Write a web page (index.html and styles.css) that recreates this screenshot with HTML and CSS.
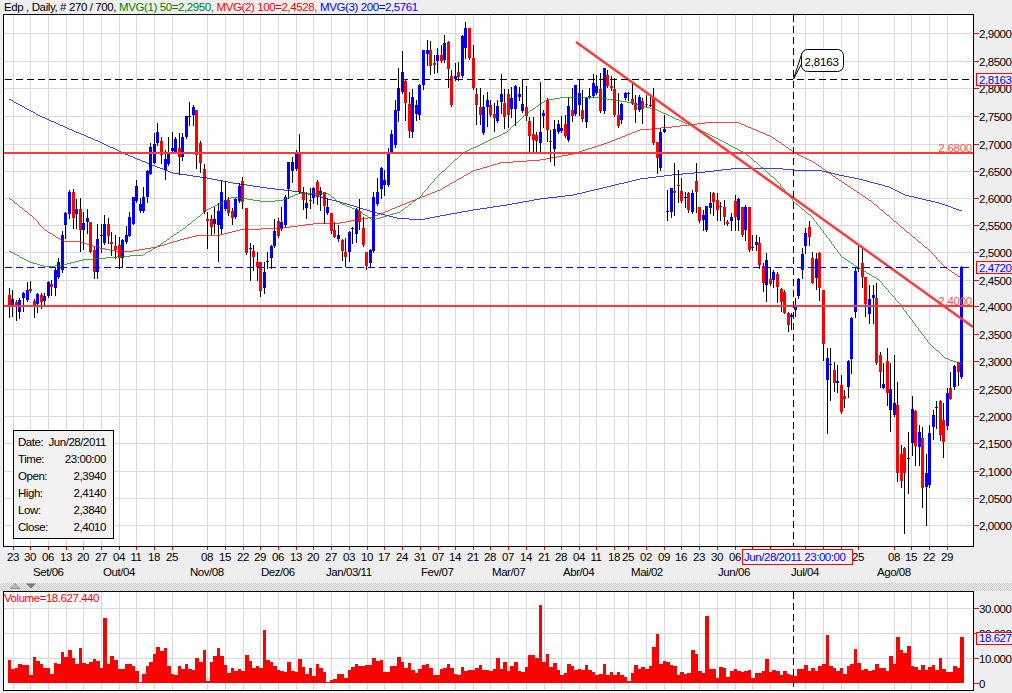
FILE: index.html
```html
<!DOCTYPE html>
<html lang="pt">
<head>
<meta charset="utf-8">
<title>Edp, Daily</title>
<link rel="stylesheet" href="styles.css">
</head>
<body>
<div class="page">
  <header class="title"><span>Edp , Daily, # 270 / 700, </span><span class="c-green">MVG(1) 50=2,2950, </span><span class="c-red">MVG(2) 100=2,4528, </span><span class="c-blue">MVG(3) 200=2,5761</span></header>
  <section class="price-panel">
    <svg id="price" class="plot" viewBox="0 14 1012 569" width="1012" height="569" xmlns="http://www.w3.org/2000/svg"></svg>
    <dl class="info">
      <div class="info-row"><dt>Date:</dt><dd>Jun/28/2011</dd></div>
      <div class="info-row"><dt>Time:</dt><dd>23:00:00</dd></div>
      <div class="info-row"><dt>Open:</dt><dd>2,3940</dd></div>
      <div class="info-row"><dt>High:</dt><dd>2,4140</dd></div>
      <div class="info-row"><dt>Low:</dt><dd>2,3840</dd></div>
      <div class="info-row"><dt>Close:</dt><dd>2,4010</dd></div>
    </dl>
  </section>
  <div class="splitter">
    <svg class="arrows" viewBox="0 0 30 6" width="30" height="6" xmlns="http://www.w3.org/2000/svg">
      <path class="arrow-up" d="M0 5.5 5 .5l5 5z"/>
      <path class="arrow-down" d="M16 .5h10l-5 5z"/>
    </svg>
  </div>
  <section class="volume-panel">
    <svg id="volume" class="plot" viewBox="0 591 1012 102" width="1012" height="102" xmlns="http://www.w3.org/2000/svg"></svg>
  </section>
</div>
<script src="chart.js"></script>
</body>
</html>
```
FILE: styles.css
```css
* { box-sizing: border-box; }
html, body { margin: 0; padding: 0; }
body {
  background: #eeeeee;
  font-family: "Liberation Sans", Arial, sans-serif;
  font-size: 11.5px;
  letter-spacing: -0.45px;
  color: #000;
  overflow: hidden;
}
.page { width: 1012px; height: 693px; display: flex; flex-direction: column; }
.title { height: 14px; line-height: 14px; padding-left: 4px; white-space: pre; letter-spacing: -0.39px; }
.c-green { color: #008000; }
.c-red { color: #ff0000; }
.c-blue { color: #0000ff; }
.price-panel { position: relative; height: 569px; }
.volume-panel { height: 102px; }
.plot { display: block; }
.plot text { font-family: "Liberation Sans", Arial, sans-serif; font-size: 11.5px; letter-spacing: -0.45px; fill: #000; }
.plot .callout-text { letter-spacing: -0.15px; }
.plot .tag-text { fill: #0000ff; }
.plot .level-text { fill: #ff5050; letter-spacing: -0.25px; }
.plot .vol-title { fill: #ff0000; }
.bg { fill: #ffffff; }
.frame { fill: none; stroke: #000; stroke-width: 1; shape-rendering: crispEdges; }
.grid { stroke: #d9d9d9; stroke-width: 1; shape-rendering: crispEdges; fill: none; }
.tick { stroke: #ff0000; stroke-width: 1; shape-rendering: crispEdges; fill: none; }
.wick { fill: #000; shape-rendering: crispEdges; }
.body-red, .vol-bar { fill: #ff0000; shape-rendering: crispEdges; }
.body-blue { fill: #0000ff; shape-rendering: crispEdges; }
.ma { fill: none; stroke-width: 0.75; shape-rendering: crispEdges; }
.ma-green { stroke: #008c00; }
.ma-red { stroke: #ff0000; }
.ma-blue { stroke: #0000d0; }
.level { stroke: #ff3838; stroke-width: 2; shape-rendering: crispEdges; }
.trend { stroke: #ff3838; stroke-width: 2.4; }
.dash-black { stroke: #000; stroke-width: 1; stroke-dasharray: 7 4; shape-rendering: crispEdges; }
.dash-blue { stroke: #0000ff; stroke-width: 1; stroke-dasharray: 7 4; shape-rendering: crispEdges; }
.callout { fill: #fff; stroke: #000; stroke-width: 1; }
.pointer { stroke: #000; stroke-width: 1; fill: none; }
.tag { fill: #f1f1f1; stroke: #ff0000; stroke-width: 1; shape-rendering: crispEdges; }
.info {
  position: absolute;
  left: 13px;
  top: 416px;
  width: 101px;
  height: 109px;
  margin: 0;
  padding: 3px 7px 2px 4px;
  border: 1px solid #000;
  background: #f2f2f2;
}
.info-row { display: flex; justify-content: space-between; height: 17px; line-height: 17px; }
.info dt, .info dd { margin: 0; }
.splitter {
  height: 8px;
  background-color: #f2f2f2;
  background-image: repeating-conic-gradient(#c6c6c6 0 25%, #f2f2f2 0 50%);
  background-size: 2px 2px;
  padding-left: 10px;
}
.arrows { display: block; }
.arrow-up { fill: #b8b8b8; stroke: #666; stroke-width: .5; }
.arrow-down { fill: #777; }
```
FILE: chart.js
```js
const NS = 'http://www.w3.org/2000/svg';
function el(parent, tag, attrs, text) {
  const n = document.createElementNS(NS, tag);
  for (const k in attrs) n.setAttribute(k, attrs[k]);
  if (text !== undefined) n.textContent = text;
  parent.appendChild(n);
  return n;
}
const R = 0, B = 1;
// colour, body top, body bottom, wick top, wick bottom (pixel rows)
const candles = [
[R,295,306,288,317],[B,299,306,290,316],[R,302,306,300,320],[B,300,312,298,318],[B,293,298,292,311],[B,290,300,282,301],[R,289,291,281,292],[R,301,306,299,317],[B,294,304,293,312],[R,295,302,293,308],
[B,296,301,293,306],[B,282,296,281,297],[R,284,287,280,295],[B,270,288,268,295],[B,262,277,258,278],[B,235,270,231,272],[B,213,225,212,238],[B,192,214,190,218],[R,192,218,189,228],[B,209,214,199,228],
[R,209,230,198,251],[B,223,230,212,249],[B,218,222,209,233],[R,222,252,222,252],[R,250,272,247,278],[B,239,272,224,278],[B,235,235,224,252],[B,224,243,215,244],[R,224,236,218,243],[R,242,244,232,255],
[R,246,250,235,258],[R,245,258,237,268],[B,240,258,239,267],[B,235,242,226,243],[B,217,236,212,236],[B,197,224,197,224],[B,186,201,180,202],[B,204,211,198,212],[B,197,211,187,212],[B,171,197,170,202],
[B,147,174,143,174],[B,144,163,133,163],[B,132,143,123,145],[R,141,155,137,163],[B,159,170,150,179],[B,152,164,137,165],[B,148,151,132,152],[B,139,152,137,153],[R,148,157,133,174],[B,137,157,133,160],
[B,116,137,116,138],[B,116,116,102,125],[B,107,115,105,125],[R,110,155,110,168],[R,143,163,141,172],[R,169,212,164,213],[R,219,221,212,248],[R,219,227,215,234],[B,219,224,207,233],[B,211,225,203,261],
[B,192,229,181,233],[B,200,209,182,210],[R,200,213,197,215],[R,211,218,208,224],[B,199,217,198,218],[B,186,201,183,202],[R,181,202,177,208],[R,208,253,208,254],[B,248,248,243,280],[R,251,257,245,270],
[R,262,267,252,280],[R,262,291,262,296],[B,272,288,262,293],[B,261,261,252,268],[B,246,258,245,268],[B,231,246,219,247],[R,221,236,218,237],[B,222,229,207,230],[B,197,225,195,226],[B,162,189,162,198],
[B,162,171,157,182],[B,154,169,150,170],[R,153,192,134,193],[R,192,200,187,209],[B,203,208,192,218],[R,200,201,188,208],[B,188,198,187,203],[R,182,196,180,204],[B,191,195,187,210],[R,192,206,192,223],
[B,207,213,198,214],[R,213,231,213,233],[R,230,237,222,237],[B,235,239,225,241],[R,240,251,239,260],[R,252,257,238,266],[B,232,252,231,261],[B,228,228,227,243],[B,209,234,208,242],[R,211,222,199,229],
[R,228,245,217,246],[R,252,266,252,269],[B,250,263,249,267],[B,197,251,192,252],[B,192,204,178,205],[B,168,189,167,198],[B,180,185,170,195],[B,153,185,148,186],[B,134,153,130,153],[B,110,145,100,147],
[B,88,111,68,121],[B,72,92,51,93],[R,81,103,80,120],[R,104,131,92,137],[B,97,132,89,137],[B,105,114,100,120],[B,85,115,84,119],[B,50,85,50,89],[B,50,54,40,65],[R,50,66,41,74],
[R,63,65,55,73],[B,55,61,48,72],[R,55,61,45,62],[B,43,60,35,62],[R,42,69,41,87],[R,76,105,70,106],[B,76,79,63,80],[R,72,77,62,80],[B,36,76,35,77],[B,28,48,22,58],
[R,28,58,28,59],[R,58,88,45,89],[R,94,105,88,124],[R,107,115,88,124],[B,107,133,95,134],[B,100,107,92,126],[R,105,115,100,116],[R,114,118,103,131],[B,106,121,100,122],[B,94,102,74,113],
[R,103,117,89,128],[R,94,115,89,127],[B,98,109,87,117],[B,86,109,85,125],[B,94,97,87,100],[B,104,111,80,112],[R,107,116,86,120],[R,121,136,117,152],[R,134,140,117,152],[R,135,141,132,152],
[B,132,143,82,153],[B,113,116,110,127],[R,100,130,98,141],[R,141,142,130,161],[B,129,149,120,165],[B,124,132,120,133],[B,128,131,116,132],[R,124,136,115,137],[B,106,140,97,141],[R,110,116,88,121],
[B,85,114,85,115],[B,93,105,79,115],[R,110,119,90,121],[B,98,122,97,127],[B,96,97,88,98],[B,83,96,74,97],[B,86,93,75,94],[R,89,111,73,112],[B,68,111,68,113],[R,75,86,70,87],
[R,86,88,76,90],[R,89,115,78,116],[R,115,126,93,127],[B,104,120,103,123],[B,93,98,92,99],[B,93,93,92,100],[R,99,103,83,104],[R,103,110,95,122],[B,97,110,95,111],[R,101,109,98,123],
[R,104,104,95,106],[B,105,105,97,106],[R,98,143,88,144],[R,142,158,142,173],[B,132,168,128,170],[B,129,132,115,132],[B,211,211,190,220],[B,188,212,188,217],[R,191,193,163,215],[R,185,185,170,202],
[R,191,201,178,202],[B,197,197,192,207],[R,193,210,192,212],[B,193,212,190,213],[R,181,192,163,212],[R,207,221,207,222],[B,215,220,210,230],[B,206,230,206,231],[B,203,208,192,213],[R,193,202,192,215],
[R,200,210,193,220],[B,206,206,202,220],[R,207,217,200,224],[R,222,224,220,225],[B,217,221,213,230],[R,201,217,195,230],[B,199,220,198,230],[R,207,235,207,236],[B,207,230,205,240],[R,207,250,207,251],
[B,247,247,235,250],[B,242,245,235,250],[R,243,265,237,268],[R,266,283,263,291],[B,260,285,253,301],[R,279,284,267,285],[B,272,280,270,287],[R,274,287,272,302],[R,289,302,288,311],[R,292,313,290,313],
[R,313,325,312,331],[B,315,317,313,329],[B,307,310,298,316],[B,279,296,278,298],[B,254,270,248,278],[B,233,246,228,253],[R,227,237,221,245],[R,258,283,252,283],[B,259,278,253,289],[R,253,288,252,300],
[R,290,344,290,360],[B,358,380,348,433],[B,364,364,348,400],[R,370,383,362,391],[B,381,383,365,392],[R,385,412,375,413],[R,396,399,390,407],[B,361,387,360,397],[B,318,359,317,373],[B,271,312,268,317],
[B,268,268,246,271],[R,263,277,248,287],[R,277,304,277,316],[B,299,314,285,323],[B,295,298,285,323],[R,298,363,283,364],[R,355,372,352,387],[B,384,388,363,388],[R,361,393,348,405],[B,389,410,363,431],
[B,403,415,355,416],[R,405,473,382,481],[R,454,481,445,487],[R,448,473,447,533],[B,458,459,432,493],[B,409,443,396,455],[R,411,446,410,465],[B,432,447,425,465],[R,438,488,427,507],[B,473,487,454,525],
[B,433,485,425,487],[B,415,427,410,439],[B,407,407,401,428],[R,401,435,400,440],[R,420,442,403,457],[B,393,426,388,429],[R,388,399,372,399],[B,366,387,365,389],[R,362,372,362,385],[B,267,377,266,378]
];
const barX = i => Math.floor(9.3 + 3.54 * i);

// volume bar tops: measured in three sections
const volA = [720,748,744,732,736,736,765,712,724,732,744,744,762,730,732,696,712,690,715,732,684,730,732,726,718,724,744,594,732,708,720,748,747,732,732,738,752,785,762,738,726,702,681,692,684,738,762,765,738,748,732,748,750,714,726,690,784,726,708,684,708,735,760,744,752,748,753,705,723,744,738,744,630,720,726,738,750,754,756,726,753,757,717,741,762,744,768,732,744,756,785,780,777,762];
const volB = [492,504,480,470,462,468,468,465,465,444,453,450,486,486,468,468,441,456,474,459,480,490,477,465,462,474,495,495,477,474,462,474,492,495,471,483,480,480,474,465,480,480,483,477,444,477,456,483,468,456,483,486,471,435,435,444,285,456,432,471,459,480,495,489,462,468,480,477,480,465,480,486,495,492,462,495,486,495,486,495,500,513,489,465,477,471,477,468,411,372,462,453,456,465];
const volC = [618,645,636,641,640,570,582,632,638,468,627,627,654,621,625,651,634,627,634,635,634,630,654,639,639,632,597,635,630,634,645,634,643,645,648,627,627,615,633,625,633,618,612,525,618,624,632,624,642,617,612,567,609,630,627,633,630,612,624,624,633,588,612,531,570,578,558,618,621,630,615,630,621,615,630,594,627,636,636,618,624,531];
const volTops = [
  ...volA.map(z => 420 + z / 3),
  ...volB.map(z => 510 + z / 3),
  ...volC.map(z => 460 + z / 3)
].map(Math.round);

const gridX = [13,30,48,66,83,101,119,136,154,172,207,225,243,260,278,296,313,331,349,367,384,402,420,438,455,473,490,508,526,544,561,579,596,614,628,646,664,681,699,717,735,752,770,805,823,841,858,894,911,929,947];
const gridY = [33,61,88,116,144,171,198,225,252,280,306,334,361,389,416,443,471,498,525];
const priceLabels = ['2,9000','2,8500','2,8000','2,7500','2,7000','2,6500','2,6000','2,5500','2,5000','2,4500','2,4000','2,3500','2,3000','2,2500','2,2000','2,1500','2,1000','2,0500','2,0000'];
const days = [['23',13],['30',30],['06',48],['13',66],['20',83],['27',101],['04',119],['11',136],['18',154],['25',172],['08',207],['15',225],['22',243],['29',260],['06',278],['13',296],['20',313],['27',331],['03',349],['10',367],['17',384],['24',402],['31',420],['07',438],['14',455],['21',473],['28',490],['07',508],['14',526],['21',544],['28',561],['04',579],['11',596],['18',614],['25',628],['02',646],['09',664],['16',681],['23',699],['30',717],['06',735],['25',858],['08',894],['15',911],['22',929],['29',947]];
const months = [['Set/06',33],['Out/04',103],['Nov/08',190],['Dez/06',261],['Jan/03/11',326],['Fev/07',421],['Mar/07',492],['Abr/04',563],['Mai/02',631],['Jun/06',718],['Jul/04',791],['Ago/08',877]];

const maGreen = [[9,251],[30,262],[47,267],[63,265],[83,260],[117,257],[143,255],[160,245],[177,233],[182,230],[207,210],[233,197],[267,202],[283,200],[300,193],[327,193],[340,203],[357,210],[373,220],[400,212],[420,197],[437,177],[463,153],[507,132],[527,113],[547,100],[567,97],[600,98],[627,102],[657,110],[672,117],[692,126],[712,136],[745,153],[765,170],[779,183],[794,202],[812,217],[822,230],[842,257],[859,268],[879,280],[899,303],[929,343],[945,358],[961,364]];
const maRed = [[9,198],[33,217],[45,230],[63,241],[80,242],[100,248],[120,252],[133,251],[157,247],[180,240],[200,235],[220,235],[240,230],[283,228],[320,223],[340,223],[373,217],[407,203],[440,190],[473,171],[500,163],[540,160],[573,154],[607,143],[640,130],[672,127],[705,123],[722,122],[739,123],[772,137],[795,153],[815,163],[839,180],[872,202],[905,230],[929,250],[945,267],[961,278]];
const maBlue = [[9,99],[40,116],[67,128],[100,142],[123,153],[147,163],[173,173],[207,178],[233,183],[267,188],[300,192],[340,202],[357,207],[373,212],[397,218],[420,220],[440,216],[473,210],[507,205],[540,199],[573,195],[607,187],[640,179],[672,175],[705,172],[739,168],[772,168],[794,170],[822,171],[839,175],[859,179],[889,187],[905,195],[939,203],[962,211]];
const pts = a => a.map(p => p.join(',')).join(' ');

function drawPrice(svg) {
  el(svg, 'rect', { class: 'bg', x: 3, y: 14, width: 971, height: 533 });
  el(svg, 'path', { class: 'grid', d: gridX.map(x => `M${x}.5 15V546`).join('') + gridY.map(y => `M4 ${y}.5H973`).join('') });

  let wicks = '', reds = '', blues = '';
  candles.forEach((c, i) => {
    const x = barX(i);
    wicks += `M${x} ${c[3]}h1V${c[4] + 1}h-1z`;
    const rect = `M${x - 1} ${c[1]}h3V${Math.max(c[2], c[1] + 1)}h-3z`;
    if (c[0] === R) reds += rect; else blues += rect;
  });
  el(svg, 'path', { class: 'wick', d: wicks });
  el(svg, 'path', { class: 'body-red', d: reds });
  el(svg, 'path', { class: 'body-blue', d: blues });

  el(svg, 'polyline', { class: 'ma ma-blue', points: pts(maBlue) });
  el(svg, 'polyline', { class: 'ma ma-red', points: pts(maRed) });
  el(svg, 'polyline', { class: 'ma ma-green', points: pts(maGreen) });

  el(svg, 'line', { class: 'level', x1: 4, x2: 973, y1: 153, y2: 153 });
  el(svg, 'line', { class: 'level', x1: 4, x2: 973, y1: 306, y2: 306 });
  el(svg, 'line', { class: 'trend', x1: 576, y1: 42, x2: 973, y2: 327 });
  el(svg, 'line', { class: 'dash-black', x1: 5, x2: 973, y1: 79.5, y2: 79.5 });
  el(svg, 'line', { class: 'dash-blue', x1: 5, x2: 973, y1: 267.5, y2: 267.5 });
  el(svg, 'line', { class: 'dash-black', x1: 793.5, x2: 793.5, y1: 15, y2: 546 });

  el(svg, 'text', { class: 'level-text', x: 972, y: 152, 'text-anchor': 'end' }, '2,6800');
  el(svg, 'text', { class: 'level-text', x: 972, y: 305, 'text-anchor': 'end' }, '2,4000');

  el(svg, 'rect', { class: 'frame', x: 3.5, y: 14.5, width: 970, height: 532 });

  el(svg, 'path', { class: 'pointer', d: 'M793.5 79 802 53M793.5 79 802 63' });
  el(svg, 'rect', { class: 'callout', x: 801.5, y: 49.5, width: 42, height: 22, rx: 6 });
  el(svg, 'text', { class: 'callout-text', x: 804.5, y: 66 }, '2,8163');

  el(svg, 'path', { class: 'tick', d: gridY.map(y => `M974 ${y}.5H979`).join('') + gridX.map(x => `M${x}.5 547V550`).join('') });
  gridY.forEach((y, i) => el(svg, 'text', { x: 979, y: y + 5 }, priceLabels[i]));
  days.forEach(d => el(svg, 'text', { x: d[1], y: 561, 'text-anchor': 'middle' }, d[0]));
  months.forEach(m => el(svg, 'text', { x: m[1], y: 576 }, m[0]));

  el(svg, 'rect', { class: 'tag', x: 976.5, y: 73.5, width: 36, height: 12 });
  el(svg, 'text', { class: 'tag-text', x: 979, y: 84 }, '2,8163');
  el(svg, 'rect', { class: 'tag', x: 976.5, y: 261.5, width: 36, height: 12 });
  el(svg, 'text', { class: 'tag-text', x: 979, y: 272 }, '2,4720');
  el(svg, 'rect', { class: 'tag', x: 742.5, y: 549.5, width: 110, height: 15 });
  el(svg, 'text', { class: 'tag-text', x: 744, y: 561 }, 'Jun/28/2011 23:00:00');
}

function drawVolume(svg) {
  el(svg, 'rect', { class: 'bg', x: 3, y: 591, width: 971, height: 100 });
  el(svg, 'path', { class: 'grid', d: gridX.map(x => `M${x}.5 592V690`).join('') + [608, 633, 658].map(y => `M4 ${y}.5H973`).join('') });
  el(svg, 'path', { class: 'vol-bar', d: volTops.map((y, i) => `M${barX(i) - 1} ${y}H${barX(i + 1) - 1}V683H${barX(i) - 1}z`).join('') });
  el(svg, 'line', { class: 'dash-black', x1: 793.5, x2: 793.5, y1: 592, y2: 690 });
  el(svg, 'text', { class: 'vol-title', x: 4, y: 602 }, 'Volume=18.627.440');
  el(svg, 'rect', { class: 'frame', x: 3.5, y: 591.5, width: 970, height: 99 });
  el(svg, 'path', { class: 'tick', d: [608, 633, 658, 683].map(y => `M974 ${y}.5H979`).join('') });
  [['30.000', 608], ['20.000', 633], ['10.000', 658], ['0', 683]].forEach(l => el(svg, 'text', { x: 979, y: l[1] + 5 }, l[0]));
  el(svg, 'rect', { class: 'tag', x: 976.5, y: 632.5, width: 36, height: 12 });
  el(svg, 'text', { class: 'tag-text', x: 979, y: 642 }, '18.627');
}

drawPrice(document.getElementById('price'));
drawVolume(document.getElementById('volume'));
```
